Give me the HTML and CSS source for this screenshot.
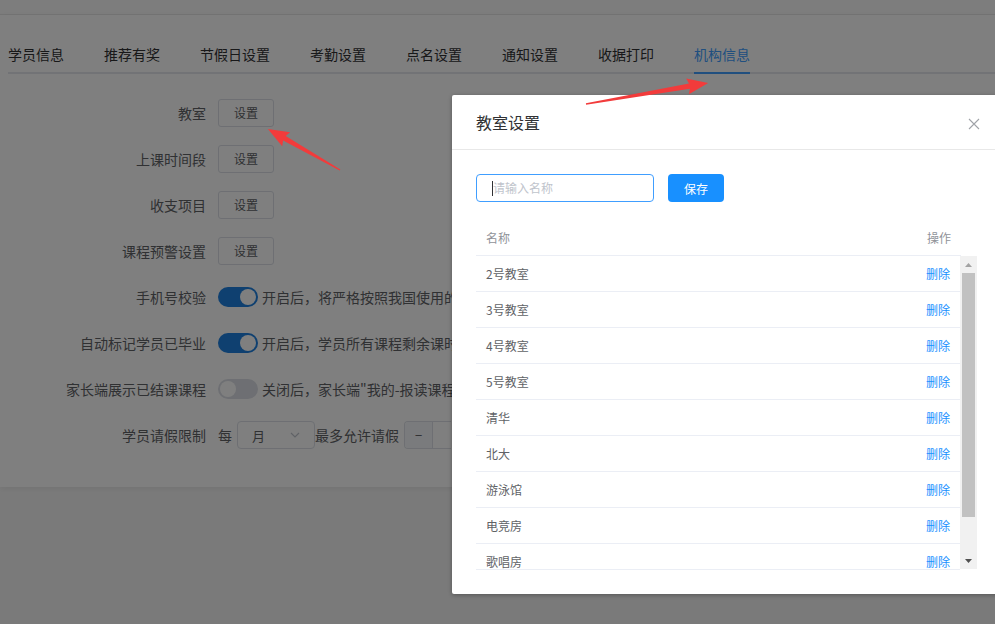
FILE: index.html
```html
<!DOCTYPE html>
<html lang="zh-CN">
<head>
<meta charset="utf-8">
<title>机构信息</title>
<link rel="stylesheet" href="styles.css">
</head>
<body>
<div class="topbar"></div>
<div class="card">
  <div class="tabs">
    <div class="tab">学员信息</div>
    <div class="tab">推荐有奖</div>
    <div class="tab">节假日设置</div>
    <div class="tab">考勤设置</div>
    <div class="tab">点名设置</div>
    <div class="tab">通知设置</div>
    <div class="tab">收据打印</div>
    <div class="tab active">机构信息</div>
  </div>
  <div class="form">
    <div class="row"><div class="label">教室</div><div class="ctl"><button class="btn">设置</button></div></div>
    <div class="row"><div class="label">上课时间段</div><div class="ctl"><button class="btn">设置</button></div></div>
    <div class="row"><div class="label">收支项目</div><div class="ctl"><button class="btn">设置</button></div></div>
    <div class="row"><div class="label">课程预警设置</div><div class="ctl"><button class="btn">设置</button></div></div>
    <div class="row"><div class="label">手机号校验</div><div class="ctl"><span class="switch on"><span class="knob"></span></span><span class="desc">开启后，将严格按照我国使用的手机号码格式进行校验</span></div></div>
    <div class="row"><div class="label">自动标记学员已毕业</div><div class="ctl"><span class="switch on"><span class="knob"></span></span><span class="desc">开启后，学员所有课程剩余课时为0时，自动标记为已毕业</span></div></div>
    <div class="row"><div class="label">家长端展示已结课课程</div><div class="ctl"><span class="switch"><span class="knob"></span></span><span class="desc">关闭后，家长端"我的-报读课程"中将不展示已结课的课程</span></div></div>
    <div class="row"><div class="label">学员请假限制</div><div class="ctl"><span class="txt">每</span><span class="select"><span>月</span><svg class="chev" viewBox="0 0 10 6" width="10" height="6"><path d="M1 1l4 4 4-4" fill="none" stroke="#c0c4cc" stroke-width="1.2"/></svg></span><span class="txt">最多允许请假</span><span class="numinput"><span class="dec">−</span></span></div></div>
  </div>
</div>

<div class="mask"></div>

<div class="dialog">
  <div class="dlg-head">
    <span class="dlg-title">教室设置</span>
    <svg class="dlg-close" viewBox="0 0 12 12" width="12" height="12"><path d="M1 1l10 10M11 1L1 11" stroke="#a0a3a8" stroke-width="1.1" fill="none"/></svg>
  </div>
  <div class="dlg-body">
    <div class="addbar">
      <div class="input"><span class="caret"></span><span class="ph">请输入名称</span></div>
      <button class="btn-primary">保存</button>
    </div>
    <div class="table">
      <div class="thead"><div class="th">名称</div><div class="th op">操作</div></div>
      <div class="tbody-wrap">
        <div class="tbody">
          <div class="tr"><div class="td">2号教室</div><div class="td op"><a class="link">删除</a></div></div>
          <div class="tr"><div class="td">3号教室</div><div class="td op"><a class="link">删除</a></div></div>
          <div class="tr"><div class="td">4号教室</div><div class="td op"><a class="link">删除</a></div></div>
          <div class="tr"><div class="td">5号教室</div><div class="td op"><a class="link">删除</a></div></div>
          <div class="tr"><div class="td">清华</div><div class="td op"><a class="link">删除</a></div></div>
          <div class="tr"><div class="td">北大</div><div class="td op"><a class="link">删除</a></div></div>
          <div class="tr"><div class="td">游泳馆</div><div class="td op"><a class="link">删除</a></div></div>
          <div class="tr"><div class="td">电竞房</div><div class="td op"><a class="link">删除</a></div></div>
          <div class="tr"><div class="td">歌唱房</div><div class="td op"><a class="link">删除</a></div></div>
        </div>
        <div class="scrollbar">
          <div class="sb-btn"><svg viewBox="0 0 7 4" width="7" height="4"><path d="M0 4L3.5 0 7 4z" fill="#a3a3a3"/></svg></div>
          <div class="sb-track"><div class="sb-thumb"></div></div>
          <div class="sb-btn"><svg viewBox="0 0 7 4" width="7" height="4"><path d="M0 0L3.5 4 7 0z" fill="#505050"/></svg></div>
        </div>
      </div>
    </div>
  </div>
</div>

<svg class="arrows" viewBox="0 0 995 624" width="995" height="624">
  <g transform="translate(586 104) rotate(-9.8)">
    <polygon points="0,-0.7 105,-2.6 103,-8 124,0 103,8 105,2.6 0,0.7" fill="#f23b3b"/>
  </g>
  <g transform="translate(340 170) rotate(-150.3)">
    <polygon points="0,-0.7 64,-2.6 62,-8 83,0 62,8 64,2.6 0,0.7" fill="#f23b3b"/>
  </g>
</svg>
</body>
</html>
```

FILE: styles.css
```css
* { box-sizing: border-box; }
html, body {
  margin: 0;
  padding: 0;
  width: 995px;
  height: 624px;
  overflow: hidden;
}
body {
  background: #f5f5f5;
  font-family: "Noto Sans CJK SC", "Noto Sans", "Liberation Sans", sans-serif;
  color: #606266;
  position: relative;
}
.topbar {
  height: 15px;
  background: #fafafa;
  border-bottom: 1px solid #e8e8e8;
}
.card {
  background: #fff;
  height: 472px;
  padding: 19px 0 0 8px;
  box-shadow: 0 2px 6px rgba(0, 0, 0, 0.06);
  overflow: hidden;
  white-space: nowrap;
}
.tabs {
  display: flex;
  height: 40px;
  border-bottom: 2px solid #e4e7ed;
}
.tab {
  position: relative;
  padding: 0 20px;
  font-size: 14px;
  line-height: 40px;
  color: #303133;
}
.tab:first-child { padding-left: 0; }
.tab.active { color: #409eff; }
.tab.active::after {
  content: "";
  position: absolute;
  left: 20px;
  right: 20px;
  bottom: -2px;
  height: 2px;
  background: #409eff;
}
.form { margin-top: 25px; }
.row {
  display: flex;
  align-items: center;
  height: 28px;
  margin-bottom: 18px;
}
.label {
  width: 210px;
  padding-right: 12px;
  text-align: right;
  font-size: 14px;
  line-height: 28px;
  color: #606266;
}
.ctl {
  display: flex;
  align-items: center;
  height: 28px;
  font-size: 14px;
}
.btn {
  height: 28px;
  width: 56px;
  padding: 0;
  border: 1px solid #dcdfe6;
  border-radius: 3px;
  background: #fff;
  color: #606266;
  font-family: inherit;
  font-size: 12px;
  line-height: 26px;
}
.switch {
  position: relative;
  width: 40px;
  height: 20px;
  border-radius: 10px;
  background: #dcdfe6;
  margin-right: 4px;
  flex: none;
}
.switch.on { background: #1f80e0; }
.knob {
  position: absolute;
  top: 2px;
  left: 2px;
  width: 16px;
  height: 16px;
  border-radius: 50%;
  background: #fff;
}
.switch.on .knob { left: 22px; }
.desc {
  display: block;
  width: 190px;
  overflow: hidden;
  color: #606266;
  line-height: 28px;
}
.txt { line-height: 28px; color: #606266; }
.select {
  display: flex;
  align-items: center;
  justify-content: space-between;
  width: 78px;
  height: 28px;
  margin-left: 5px;
  padding: 0 14px 0 14px;
  border: 1px solid #dcdfe6;
  border-radius: 4px;
  font-size: 13px;
  color: #606266;
}
.numinput {
  display: flex;
  height: 28px;
  width: 47px;
  margin-left: 5px;
  border: 1px solid #dcdfe6;
  border-right: none;
  border-radius: 4px 0 0 4px;
  overflow: hidden;
  font-size: 13px;
}
.numinput .dec {
  width: 28px;
  background: #f5f7fa;
  color: #606266;
  text-align: center;
  line-height: 26px;
  border-right: 1px solid #dcdfe6;
}

.mask {
  position: absolute;
  inset: 0;
  background: rgba(0, 0, 0, 0.5);
}

.dialog {
  position: absolute;
  left: 452px;
  top: 95px;
  width: 560px;
  background: #fff;
  border-radius: 2px;
  box-shadow: 0 1px 4px rgba(0, 0, 0, 0.3);
}
.dlg-head {
  position: relative;
  height: 55px;
  padding: 0 24px;
  border-bottom: 1px solid #e8e8e8;
  display: flex;
  align-items: center;
}
.dlg-title {
  font-size: 16px;
  color: #303133;
  line-height: 24px;
}
.dlg-close {
  position: absolute;
  left: 516px;
  top: 23px;
}
.dlg-body { padding: 24px 24px 24px 24px; }
.addbar { display: flex; align-items: center; gap: 14px; }
.input {
  display: flex;
  align-items: center;
  width: 178px;
  height: 28px;
  padding-left: 15px;
  border: 1px solid #409eff;
  border-radius: 4px;
}
.caret {
  width: 1px;
  height: 15px;
  background: #303133;
}
.ph { font-size: 12px; color: #c0c4cc; line-height: 26px; }
.btn-primary {
  width: 56px;
  height: 28px;
  padding: 0;
  border: none;
  border-radius: 4px;
  background: #1890ff;
  color: #fff;
  font-family: inherit;
  font-size: 12px;
}
.table { margin-top: 18px; width: 501px; }
.thead {
  display: flex;
  width: 485px;
  height: 36px;
  border-bottom: 1px solid #ebeef5;
}
.th, .td {
  flex: 1;
  padding: 0 10px;
  font-size: 12px;
  display: flex;
  align-items: center;
}
.th { color: #909399; }
.th.op, .td.op { justify-content: flex-end; flex: none; width: 120px; }
.tbody-wrap { display: flex; }
.tbody {
  width: 485px;
  height: 314px;
  overflow: hidden;
  border-bottom: 1px solid #ebeef5;
}
.tr {
  display: flex;
  height: 36px;
  border-bottom: 1px solid #ebeef5;
}
.td { color: #606266; }
.link { color: #1890ff; }
.scrollbar {
  width: 17px;
  height: 313px;
  background: #f1f1f1;
  display: flex;
  flex-direction: column;
}
.sb-btn {
  height: 17px;
  display: flex;
  align-items: center;
  justify-content: center;
}
.sb-track { flex: 1; padding: 0 2px; }
.sb-thumb { height: 244px; background: #c1c1c1; }
.arrows {
  position: absolute;
  left: 0;
  top: 0;
  pointer-events: none;
}
```
